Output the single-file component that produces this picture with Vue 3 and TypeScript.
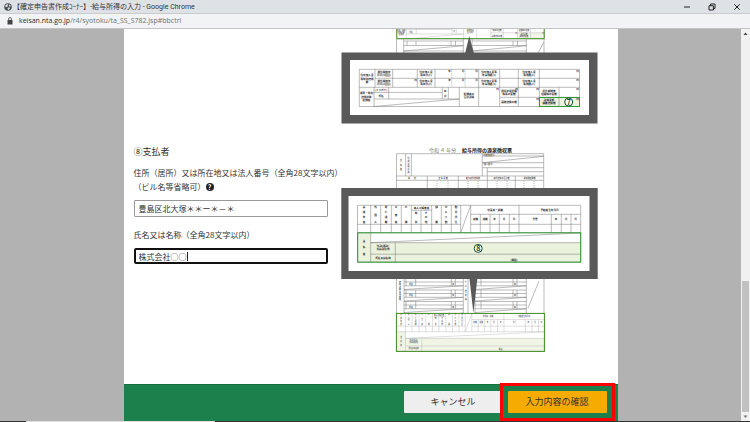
<script setup lang="ts">
import { ref } from 'vue'

interface Label {
  x: number
  y: number
  t: string
}

const address = ref('豊島区北大塚＊＊ー＊－＊')
const payer = ref('株式会社○○')

function column(x: number, top: number, bottom: number, text: string): Label[] {
  const chars = [...text]
  const step = chars.length > 1 ? (bottom - top) / (chars.length - 1) : 0
  return chars.map((t, i) => ({ x, y: top + i * step, t }))
}

function pair(x: number, y: number, first: string, second: string): Label[] {
  return [
    { x, y: y - 1, t: first },
    { x, y: y + 2, t: second },
  ]
}

const housingLabels: Label[] = [
  { x: 367, y: 76, t: '住宅借入金' },
  { x: 367, y: 79.5, t: '等特別控除' },
  { x: 367, y: 83, t: '数' },
  ...pair(384, 74, '居住開始年', '月日(1回目)'),
  ...pair(384, 83, '居住開始年', '月日(2回目)'),
  ...pair(426, 74, '住宅借入金', '等区分(1)'),
  ...pair(426, 83, '住宅借入金', '等区分(2)'),
  ...pair(489, 74, '住宅借入金等', '年末残高(1)'),
  ...pair(489, 83, '住宅借入金等', '年末残高(2)'),
  ...pair(529, 74, '住宅借入金', '等残高(1)'),
  ...pair(529, 83, '住宅借入金', '等残高(2)'),
  { x: 366.5, y: 94, t: '源泉・特別' },
  { x: 366.5, y: 97.5, t: '控除対象' },
  { x: 366.5, y: 101, t: '配偶者' },
  { x: 381, y: 90.8, t: '(フリガナ)' },
  { x: 381, y: 97, t: '氏名' },
  { x: 445.3, y: 92, t: '区' },
  { x: 445.3, y: 96.5, t: '分' },
  ...pair(469, 96, '配偶者の', '合計所得'),
  ...pair(509, 92.5, '国民年金保険', '料等の金額'),
  ...pair(549, 92.5, '旧長期損害', '保険料の金額'),
  { x: 509, y: 103, t: '基礎控除の額' },
  ...pair(549, 101.5, '所得金額', '調整控除額'),
]

const unitLabels: Label[] = [
  { x: 415.5, y: 80.5, t: '円' },
  ...[71.7, 80.7].flatMap((y) => [
    { x: 449.5, y, t: '年' },
    { x: 463, y, t: '月' },
    { x: 476.5, y, t: '日' },
    { x: 577.5, y, t: '円' },
  ]),
  ...[497.5, 516.5, 537.5, 577.5].map((x) => ({ x, y: 90, t: '円' })),
  { x: 537.5, y: 99.7, t: '円' },
  { x: 577.5, y: 99.7, t: '円' },
]

const payerLabels: Label[] = [
  ...column(364, 208.3, 223, '未成年者'),
  ...column(375.5, 208.3, 223, '外国人'),
  ...column(386, 208.3, 223, '死亡退職'),
  ...column(396, 208.3, 223, '災害者'),
  ...column(406, 208.3, 223, '乙欄'),
  { x: 421.5, y: 208.8, t: '本人が障害者' },
  ...column(416, 213.5, 223, '特別'),
  ...column(426, 213.5, 223, 'その他'),
  ...column(436.5, 208.3, 223, '寡婦'),
  ...column(446, 208.3, 223, 'ひとり親'),
  ...column(456, 208.3, 223, '勤労学生'),
  { x: 495, y: 210.7, t: '中途就・退職' },
  { x: 549.5, y: 210.7, t: '受給者生年月日' },
  { x: 475.5, y: 219.7, t: '就職' },
  { x: 485, y: 219.7, t: '退職' },
  { x: 494.5, y: 219.7, t: '年' },
  { x: 504, y: 219.7, t: '月' },
  { x: 514, y: 219.7, t: '日' },
  { x: 535, y: 219.7, t: '元号' },
  { x: 556, y: 219.7, t: '年' },
  { x: 566, y: 219.7, t: '月' },
  { x: 575.5, y: 219.7, t: '日' },
  ...column(364, 241.5, 254.5, '支払者'),
  ...pair(383, 247.8, '住所(居所)', '又は所在地'),
  { x: 383, y: 258.8, t: '氏名又は名称' },
  { x: 514, y: 261, t: '(電話)' },
]

const formHeadLabels: Label[] = [
  ...column(401, 161, 170, '支払者'),
  ...column(408.5, 159, 173, '住所又は居所'),
  { x: 412, y: 179.2, t: '種　　別' },
  { x: 443, y: 179.2, t: '支 払 金 額' },
  { x: 473, y: 179.2, t: '給与所得控除後' },
  { x: 501.5, y: 179.2, t: '所得控除の合計額' },
  { x: 529.5, y: 179.2, t: '源泉徴収税額' },
  { x: 489, y: 155.7, t: '(受給者番号)' },
  { x: 488, y: 165.2, t: '(個人番号)' },
]

const familyRows = [278.5, 290, 301.5]
</script>

<template>
  <div class="window">
    <header class="titlebar">
      <svg class="globe" viewBox="0 0 16 16" aria-hidden="true">
        <circle cx="8" cy="8" r="7.5" fill="#4a4d51" />
        <path d="M3 4.5 7 2.2 8.4 4 6.8 5.6 7.4 7.6 5.2 8.2 2 6.8ZM10.5 2.6 13.8 6 11.8 7.4 9.6 5.8ZM8.2 9 11.8 9.2 11 12 8.6 14.2 7 11.6Z" fill="#dee1e6" />
      </svg>
      <span class="title">【確定申告書作成ｺｰﾅｰ】-給与所得の入力 - Google Chrome</span>
      <div class="window-controls">
        <button type="button" aria-label="最小化"><svg viewBox="0 0 8 8"><path d="M1 4H7" /></svg></button>
        <button type="button" aria-label="元に戻す"><svg viewBox="0 0 8 8"><path d="M1 2.8H5.4V7H1ZM2.6 2.8V1H7V5.4H5.4" /></svg></button>
        <button type="button" aria-label="閉じる"><svg viewBox="0 0 8 8"><path d="M1.3 1.3 6.7 6.7M6.7 1.3 1.3 6.7" /></svg></button>
      </div>
    </header>

    <div class="addressbar">
      <svg class="lock" viewBox="0 0 6 8" aria-hidden="true">
        <rect x="0.5" y="3" width="5" height="4.4" rx="0.5" fill="#444" />
        <path d="M1.6 3.2V2a1.4 1.4 0 0 1 2.8 0V3.2" fill="none" stroke="#444" stroke-width="0.8" />
      </svg>
      <span class="url"><span class="host">keisan.nta.go.jp</span>/r4/syotoku/ta_SS_S782.jsp#bbctrl</span>
    </div>

    <div class="viewport">
      <div class="backdrop">
        <main class="page">
          <form class="form" @submit.prevent>
            <svg class="figure upper" viewBox="341 29 257 95" role="img" aria-label="源泉徴収票の所得金額調整控除額の欄">
              <defs>
                <g id="housing-table">
                  <rect x="539.5" y="97.3" width="40" height="9.2" fill="#eaf1dc" />
                  <path
                    class="rule"
                    d="M359.3 69.3H579.5V106.5H359.3ZM375 78.3H579.5M359.3 87.3H579.5M374 92.4H442M374 99H459.3M500 97.3H579.5M375 69.3V87.3M392.7 69.3V87.3M417.3 69.3V87.3M435 69.3V87.3M478.7 69.3V106.5M499.7 69.3V106.5M518.3 69.3V106.5M539.3 69.3V106.5M374 87.3V106.5M388.7 87.3V99M442.3 87.3V99M448.3 87.3V99M459.3 87.3V106.5M559 87.3V106.5M374 106.5 459.3 99"
                  />
                  <path class="rule dotted" d="M451.7 69.3V87.3M465 69.3V87.3" />
                  <text v-for="(l, i) in housingLabels" :key="i" class="tiny" :x="l.x" :y="l.y">{{ l.t }}</text>
                  <text v-for="(l, i) in unitLabels" :key="`u${i}`" class="tiny" :x="l.x" :y="l.y">{{ l.t }}</text>
                </g>
              </defs>
              <path
                class="rule"
                d="M396.5 39V53M403.7 39V53M463.3 39V53M472 39V53M526.3 39V53M544 39V53M403.7 41H463.3M403.7 45.5H463.3M403.7 51H463.3M472 41H526.3M472 45.5H526.3M472 51H526.3M404 51 463.3 45.8M472 51 526.3 45.8M407 41V45.5M416 41V45.5M451 41V45.5M455.5 41V45.5M513 41V45.5M517.5 41V45.5M538 53 544 42"
              />
              <use class="reduced" href="#housing-table" transform="translate(155 -32.6) scale(0.672)" />
              <path d="M396.8 20V38.7H544.2V20" class="mark-dark" />
              <path d="M469.3 36 473.8 53H465.2Z" fill="#595959" />
              <rect x="341.5" y="52.5" width="256" height="71" fill="#595959" />
              <rect x="350" y="60" width="239" height="55" fill="#fff" />
              <use href="#housing-table" />
              <rect x="539.5" y="97.5" width="40" height="9" class="mark" />
              <circle cx="568.7" cy="102" r="4" class="badge" />
              <text x="568.7" y="104.6" class="badge-text">7</text>
            </svg>

            <section class="fields">
              <h2>⑧支払者</h2>
              <div class="label-block">
                <label for="address">
                  <span class="label-line">住所（居所）又は所在地又は法人番号（全角28文字以内）</span>
                  <span>（ビル名等省略可）</span>
                </label>
                <button type="button" class="help" aria-label="ヘルプ">?</button>
              </div>
              <input id="address" v-model="address" type="text" />
              <label class="payer-label" for="payer">氏名又は名称（全角28文字以内）</label>
              <div class="active-field">
                <input id="payer" v-model="payer" type="text" />
                <span class="caret" aria-hidden="true"></span>
              </div>
            </section>

            <svg class="figure" viewBox="341 146 257 207" role="img" aria-label="源泉徴収票の支払者の欄">
              <defs>
                <g id="payer-table">
                  <path d="M357.5 232.7H370.7V242.7H580.7V262H357.5Z" fill="#eaf1dc" />
                  <path
                    class="rule"
                    d="M357.5 205.3H580.7V262H357.5ZM357.5 224.3H460.7M470.7 224.3H580.7M357.5 232.7H580.7M411.3 210.3H431.7M470.7 214.3H580.7M370.7 205.3V262M380.7 205.3V232.7M391.3 205.3V232.7M401.3 205.3V232.7M411.3 205.3V232.7M421 210.3V232.7M431.7 205.3V232.7M441.3 205.3V232.7M451.3 205.3V232.7M460.7 205.3V232.7M470.7 205.3V232.7M480.3 214.3V232.7M490 214.3V232.7M499.3 214.3V232.7M509.3 214.3V232.7M519 205.3V232.7M551.3 214.3V232.7M561.3 214.3V232.7M571 214.3V232.7M460.7 232.7 470.7 205.3M370.7 242.7H580.7M370.7 254.2H580.7M395.3 242.7V262M370.7 242.7 580.7 233"
                  />
                  <text v-for="(l, i) in payerLabels" :key="i" class="tiny" :x="l.x" :y="l.y">{{ l.t }}</text>
                </g>
              </defs>
              <text x="429" y="151.5" class="year">令和 ４ 年分</text>
              <text x="462" y="151.5" class="slip-title">給与所得の源泉徴収票</text>
              <path
                class="rule"
                d="M396.5 188V153.7H543.7V188M396.5 176H543.7M396.5 180.3H543.7M405.7 153.7V176M411.3 153.7V176M482.3 153.7V176M482.3 156H543.7M482.3 162.7H543.7M482.3 167.7H543.7M487.3 171.7H543.7M487.3 167.7V188M427.3 176V188M458.3 176V188M515.3 176V188M482.3 162.7 543.7 156.3"
              />
              <path class="rule dotted" d="M437 181V188M448 181V188M468 181V188M478 181V188M497 181V188M507 181V188M524 181V188M534 181V188" />
              <text v-for="(l, i) in formHeadLabels" :key="i" class="micro" :x="l.x" :y="l.y">{{ l.t }}</text>

              <path class="rule" d="M396.5 279V313M404 279V313M463.3 279V313M468 279V313M475 279V313M526.3 279V313M544 279V313M528 308 539 281" />
              <g v-for="y in familyRows" :key="y">
                <path
                  class="rule"
                  :d="`M404 ${y}H463.3M404 ${y + 3.5}H463.3M404 ${y + 7.3}H463.3M475 ${y}H526.3M475 ${y + 3.5}H526.3M475 ${y + 7.3}H526.3M406 ${y}v7.3M415.7 ${y}v7.3M451.3 ${y}v7.3M455.3 ${y}v7.3M481 ${y}v7.3M513 ${y}v7.3M517 ${y}v7.3M404 ${y + 11}L463.3 ${y + 7.3}M475 ${y + 11}L526.3 ${y + 7.3}`"
                />
                <text class="micro" x="411" :y="y + 6">氏名</text>
                <text class="micro" x="453.3" :y="y + 6">区</text>
                <text class="micro" x="515" :y="y + 6">区</text>
              </g>
              <text v-for="(l, i) in column(400, 283, 300, '控除対象扶養親族')" :key="`k${i}`" class="micro" :x="l.x" :y="l.y">{{ l.t }}</text>
              <text v-for="(l, i) in column(465.7, 283, 300, '十六歳未満')" :key="`s${i}`" class="micro" :x="l.x" :y="l.y">{{ l.t }}</text>

              <use class="reduced" href="#payer-table" transform="translate(159.3 177.2) scale(0.664)" />
              <rect x="396.4" y="313.4" width="148" height="38" class="mark-dark" />

              <path d="M469.4 278H477.4L473.4 313Z" fill="#595959" />
              <rect x="341.3" y="188" width="256.4" height="91" fill="#595959" />
              <rect x="348.5" y="196" width="241" height="75" fill="#fff" />
              <use href="#payer-table" />
              <rect x="357.7" y="232.8" width="223" height="29.4" class="mark" />
              <circle cx="478.2" cy="248.4" r="4" class="badge" />
              <text x="478.2" y="251" class="badge-text">8</text>
            </svg>
          </form>

          <footer class="actions">
            <button type="button" class="action">キャンセル</button>
            <div class="highlight">
              <button type="button" class="action primary">入力内容の確認</button>
            </div>
          </footer>
        </main>
      </div>
      <div class="scrollbar" aria-hidden="true">
        <svg viewBox="0 0 9 9"><path d="M2.5 6 4.5 3.5 6.5 6Z" fill="#444" /></svg>
        <div class="track"><div class="thumb"></div></div>
        <svg viewBox="0 0 9 9"><path d="M2.5 3.5 4.5 6 6.5 3.5Z" fill="#777" /></svg>
      </div>
    </div>
    <div class="taskbar"></div>
  </div>
</template>

<style>
body {
  margin: 0;
}
</style>

<style scoped>
.window {
  display: flex;
  flex-direction: column;
  min-height: 100vh;
  color: #333;
  font-family: "Noto Sans CJK JP", sans-serif;
  font-size: 8px;
}

.window *,
.window {
  box-sizing: border-box;
}

button,
input {
  margin: 0;
  font: inherit;
  color: inherit;
}

.titlebar {
  display: flex;
  align-items: center;
  height: 14px;
  padding: 0 4px;
  border-bottom: 1px solid #c9cbcf;
  background: #dee1e6;
}

.globe {
  width: 8px;
  height: 8px;
}

.title {
  margin-left: 1px;
  font-family: Roboto, "Noto Sans CJK JP", sans-serif;
  font-size: 7px;
  line-height: 12px;
  white-space: nowrap;
}

.window-controls {
  display: flex;
  gap: 17px;
  margin-left: auto;
  padding-right: 5px;
}

.window-controls button {
  display: flex;
  padding: 0;
  border: 0;
  background: none;
}

.window-controls svg {
  width: 8px;
  height: 8px;
  fill: none;
  stroke: #222;
}

.addressbar {
  display: flex;
  align-items: center;
  gap: 6px;
  height: 15px;
  padding: 0 7px;
  border-bottom: 1px solid #c4c4c4;
  background: #f1f3f4;
}

.lock {
  width: 6px;
  height: 8px;
}

.url {
  font-family: "Open Sans", sans-serif;
  font-size: 7px;
  line-height: 12px;
  color: #707478;
}

.host {
  color: #2a2c2e;
}

.viewport {
  display: flex;
  flex: 1;
}

.backdrop {
  display: flex;
  flex: 1;
  justify-content: center;
  background: #b2b2b2;
}

.page {
  display: flex;
  flex-direction: column;
  width: 100%;
  max-width: 494px;
  background: #fff;
}

.form {
  display: grid;
  flex: 1;
  grid-template-columns: minmax(0, 1fr) 257px;
  align-content: start;
  row-gap: 22px;
  padding: 0 20px 30px 10px;
}

.figure {
  display: block;
  width: 100%;
}

.upper {
  grid-column: 2;
}

.fields {
  display: flex;
  flex-direction: column;
  padding-right: 13px;
}

h2 {
  margin: 0;
  font-size: 9px;
  font-weight: 400;
  line-height: 12px;
}

.label-block {
  margin: 8px -12px 6px 0;
  line-height: 14px;
}

.label-line {
  display: block;
  white-space: nowrap;
}

.payer-label {
  margin: 11px 0 6px;
  line-height: 14px;
}

.help {
  width: 8px;
  height: 8px;
  padding: 0;
  border: 0;
  border-radius: 50%;
  background: #222;
  color: #fff;
  font-size: 7px;
  font-weight: 700;
  line-height: 8px;
}

input {
  display: block;
  width: 100%;
  height: 17px;
  padding: 0 4px;
  border: 1px solid #999;
  border-radius: 1px;
  background: #fff;
}

.active-field {
  position: relative;
}

.active-field input {
  height: 16px;
  padding: 0 3px;
  border: 2px solid #111;
  border-radius: 2px;
  outline: 0;
}

.caret {
  position: absolute;
  top: 4px;
  left: 53px;
  width: 1px;
  height: 9px;
  background: #222;
}

.actions {
  display: flex;
  justify-content: flex-end;
  gap: 5px;
  padding: 6px 11px 8px;
  border-top: 1px solid #13703d;
  background: #1b804b;
}

.action {
  display: block;
  width: 99px;
  height: 22px;
  padding: 0;
  border: 0;
  border-radius: 1px;
  background: #eee;
  font-size: 9px;
  line-height: 22px;
}

.primary {
  background: #f6ab00;
}

.highlight {
  position: relative;
}

.highlight::after {
  content: "";
  position: absolute;
  inset: -8px;
  border: 3px solid #f00;
  pointer-events: none;
}

.scrollbar {
  display: flex;
  flex-direction: column;
  width: 9px;
  background: #f1f1f1;
}

.track {
  display: flex;
  flex: 1;
  flex-direction: column;
  justify-content: flex-end;
}

.thumb {
  height: 35%;
  margin: 0 1px;
  background: #c1c1c1;
}

.taskbar {
  height: 1px;
  background: linear-gradient(90deg, #333 26px, #ddd 26px, #ddd 215px, #333 215px);
}

.rule {
  fill: none;
  stroke: #777;
  stroke-width: 0.5;
}

.dotted {
  stroke-dasharray: 1 1;
}

.reduced {
  opacity: 0.7;
}

.tiny,
.micro {
  fill: #222;
  font-size: 2.6px;
  font-weight: 700;
  text-anchor: middle;
}

.micro {
  fill: #555;
  font-size: 2px;
}

.year {
  fill: #777;
  font-size: 5px;
}

.slip-title {
  fill: #222;
  font-size: 5px;
  font-weight: 700;
}

.mark {
  fill: none;
  stroke: #2f9a3a;
}

.mark-dark {
  fill: none;
  stroke: #438a25;
}

.badge {
  fill: #fff;
  stroke: #14502c;
}

.badge-text {
  fill: #14502c;
  font-size: 7px;
  font-weight: 700;
  text-anchor: middle;
}
</style>
